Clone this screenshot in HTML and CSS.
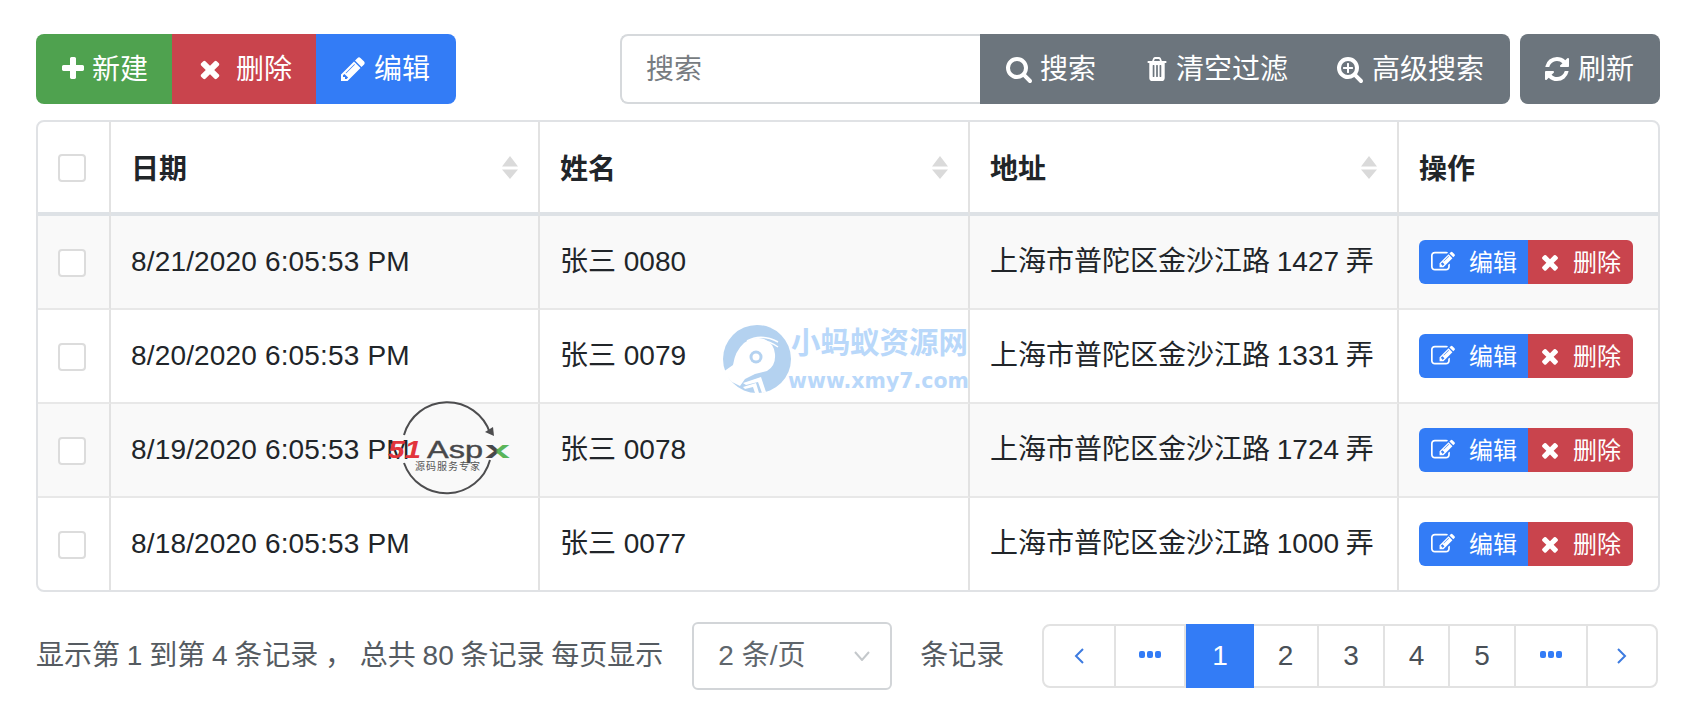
FILE: index.html
```html
<!DOCTYPE html>
<html lang="zh-CN">
<head>
<meta charset="utf-8">
<title>表格</title>
<link rel="stylesheet" href="styles.css">
</head>
<body>
<svg class="defs" width="0" height="0" aria-hidden="true">
  <symbol id="i-plus" viewBox="0 0 1792 1792"><path d="M1600 736v192q0 40-28 68t-68 28h-416v416q0 40-28 68t-68 28h-192q-40 0-68-28t-28-68v-416h-416q-40 0-68-28t-28-68v-192q0-40 28-68t68-28h416v-416q0-40 28-68t68-28h192q40 0 68 28t28 68v416h416q40 0 68 28t28 68z"/></symbol>
  <symbol id="i-times" viewBox="0 0 1792 1792"><path d="M1490 1322q0 40-28 68l-136 136q-28 28-68 28t-68-28l-294-294-294 294q-28 28-68 28t-68-28l-136-136q-28-28-28-68t28-68l294-294-294-294q-28-28-28-68t28-68l136-136q28-28 68-28t68 28l294 294 294-294q28-28 68-28t68 28l136 136q28 28 28 68t-28 68l-294 294 294 294q28 28 28 68z"/></symbol>
  <symbol id="i-pencil" viewBox="0 0 1792 1792"><path d="M491 1536l91-91-235-235-91 91v107h128v128h107zm523-928q0-22-22-22-10 0-17 7l-542 542q-7 7-7 17 0 22 22 22 10 0 17-7l542-542q7-7 7-17zm-54-192l416 416-832 832h-416v-416zm683 96q0 53-37 90l-166 166-416-416 166-165q36-38 90-38 53 0 91 38l235 234q37 39 37 91z"/></symbol>
  <symbol id="i-search" viewBox="0 0 1792 1792"><path d="M1216 832q0-185-131.500-316.500t-316.500-131.500-316.500 131.500-131.500 316.500 131.500 316.500 316.500 131.500 316.500-131.500 131.500-316.500zm512 832q0 52-38 90t-90 38q-54 0-90-38l-343-342q-179 124-399 124-143 0-273.500-55.500t-225-150-150-225-55.500-273.500 55.500-273.500 150-225 225-150 273.500-55.500 273.500 55.500 225 150 150 225 55.500 273.500q0 220-124 399l343 343q37 37 37 90z"/></symbol>
  <symbol id="i-search-plus" viewBox="0 0 1792 1792"><path d="M1088 800v64q0 13-9.500 22.500t-22.500 9.500h-224v224q0 13-9.500 22.500t-22.500 9.500h-64q-13 0-22.500-9.500t-9.500-22.500v-224h-224q-13 0-22.500-9.500t-9.500-22.500v-64q0-13 9.500-22.500t22.500-9.500h224v-224q0-13 9.500-22.500t22.500-9.500h64q13 0 22.500 9.500t9.500 22.500v224h224q13 0 22.500 9.500t9.500 22.500zm128 32q0-185-131.500-316.500t-316.500-131.500-316.500 131.500-131.500 316.500 131.500 316.500 316.500 131.500 316.500-131.500 131.500-316.500zm512 832q0 53-37.500 90.500t-90.500 37.500q-54 0-90-38l-343-342q-179 124-399 124-143 0-273.500-55.500t-225-150-150-225-55.500-273.500 55.500-273.500 150-225 225-150 273.500-55.500 273.500 55.500 225 150 150 225 55.500 273.500q0 220-124 399l343 343q37 37 37 90z"/></symbol>
  <symbol id="i-trash" viewBox="0 0 1792 1792" preserveAspectRatio="none"><path d="M704 1376v-704q0-14-9-23t-23-9h-64q-14 0-23 9t-9 23v704q0 14 9 23t23 9h64q14 0 23-9t9-23zm256 0v-704q0-14-9-23t-23-9h-64q-14 0-23 9t-9 23v704q0 14 9 23t23 9h64q14 0 23-9t9-23zm256 0v-704q0-14-9-23t-23-9h-64q-14 0-23 9t-9 23v704q0 14 9 23t23 9h64q14 0 23-9t9-23zm-544-992h448l-48-117q-7-9-17-11h-317q-10 2-17 11zm928 32v64q0 14-9 23t-23 9h-96v948q0 83-47 143.500t-113 60.500h-832q-66 0-113-58.500t-47-141.500v-952h-96q-14 0-23-9t-9-23v-64q0-14 9-23t23-9h309l70-167q15-37 54-63t79-26h320q40 0 79 26t54 63l70 167h309q14 0 23 9t9 23z"/></symbol>
  <symbol id="i-refresh" viewBox="0 0 1792 1792"><path d="M1639 1056q0 5-1 7-64 268-268 434.500t-478 166.500q-146 0-282.500-55t-243.500-157l-129 129q-19 19-45 19t-45-19-19-45v-448q0-26 19-45t45-19h448q26 0 45 19t19 45-19 45l-137 137q71 66 161 102t187 36q134 0 250-65t186-179q11-17 53-117 8-23 30-23h192q13 0 22.500 9.500t9.500 22.500zm25-800v448q0 26-19 45t-45 19h-448q-26 0-45-19t-19-45 19-45l138-138q-148-137-349-137-134 0-250 65t-186 179q-11 17-53 117-8 23-30 23h-199q-13 0-22.500-9.500t-9.500-22.500v-7q65-268 270-434.500t480-166.500q146 0 284 55.500t245 156.500l130-129q19-19 45-19t45 19 19 45z"/></symbol>
  <symbol id="i-edit" viewBox="0 0 1792 1792"><path d="M888 1184l116-116-152-152-116 116v56h96v96h56zm440-720q-16-16-33 1l-350 350q-17 17-1 33t33-1l350-350q17-17 1-33zm80 594v190q0 119-84.500 203.500t-203.500 84.500h-832q-119 0-203.500-84.500t-84.500-203.500v-832q0-119 84.500-203.500t203.500-84.500h832q63 0 117 25 15 7 18 23 3 17-9 29l-49 49q-14 14-32 8-23-6-45-6h-832q-66 0-113 47t-47 113v832q0 66 47 113t113 47h832q66 0 113-47t47-113v-126q0-13 9-22l64-64q15-15 35-8t20 29zm-96-738l288 288-672 672h-288v-288zm444 132l-92 92-288-288 92-92q28-28 68-28t68 28l152 152q28 28 28 68t-28 68z"/></symbol>
  <symbol id="i-sort" viewBox="0 0 16 24"><path d="M8 0l8 10.500H0zM0 13.500h16L8 23z"/></symbol>
  <symbol id="i-dots" viewBox="0 0 22 7"><rect x="0" y="0" width="6" height="7" rx="2"/><rect x="8" y="0" width="6" height="7" rx="2"/><rect x="16" y="0" width="6" height="7" rx="2"/></symbol>
</svg>

<main class="page">
  <div class="toolbar">
    <div class="btn-group">
      <button class="btn btn-new"><svg class="ico"><use href="#i-plus"/></svg><span>新建</span></button>
      <button class="btn btn-del"><svg class="ico"><use href="#i-times"/></svg><span>删除</span></button>
      <button class="btn btn-edit"><svg class="ico"><use href="#i-pencil"/></svg><span>编辑</span></button>
    </div>
    <div class="tools">
      <div class="search-group">
        <input class="search-input" type="text" placeholder="搜索">
        <div class="search-btns">
          <button class="btn btn-gray btn-search"><svg class="ico"><use href="#i-search"/></svg><span>搜索</span></button>
          <button class="btn btn-gray btn-clear"><svg class="ico ico-trash"><use href="#i-trash"/></svg><span>清空过滤</span></button>
          <button class="btn btn-gray btn-adv"><svg class="ico"><use href="#i-search-plus"/></svg><span>高级搜索</span></button>
        </div>
      </div>
      <button class="btn btn-gray btn-refresh"><svg class="ico"><use href="#i-refresh"/></svg><span>刷新</span></button>
    </div>
  </div>

  <div class="table-wrap">
    <table class="grid">
      <colgroup>
        <col class="c-check"><col class="c-date"><col class="c-name"><col class="c-addr"><col>
      </colgroup>
      <thead>
        <tr>
          <th><span class="check"></span></th>
          <th><div class="th-in"><span class="th-text">日期</span><svg class="sort"><use href="#i-sort"/></svg></div></th>
          <th><div class="th-in"><span class="th-text">姓名</span><svg class="sort"><use href="#i-sort"/></svg></div></th>
          <th><div class="th-in"><span class="th-text">地址</span><svg class="sort"><use href="#i-sort"/></svg></div></th>
          <th><div class="th-in"><span class="th-text">操作</span></div></th>
        </tr>
      </thead>
      <tbody>
        <tr>
          <td><span class="check"></span></td><td class="t-date">8/21/2020 6:05:53 PM</td><td>张三 0080</td><td class="t-addr">上海市普陀区金沙江路 1427 弄</td>
          <td><div class="actions"><button class="act act-edit"><svg class="ico-s"><use href="#i-edit"/></svg><span>编辑</span></button><button class="act act-del"><svg class="ico-s"><use href="#i-times"/></svg><span>删除</span></button></div></td>
        </tr>
        <tr>
          <td><span class="check"></span></td><td class="t-date">8/20/2020 6:05:53 PM</td><td>张三 0079</td><td class="t-addr">上海市普陀区金沙江路 1331 弄</td>
          <td><div class="actions"><button class="act act-edit"><svg class="ico-s"><use href="#i-edit"/></svg><span>编辑</span></button><button class="act act-del"><svg class="ico-s"><use href="#i-times"/></svg><span>删除</span></button></div></td>
        </tr>
        <tr>
          <td><span class="check"></span></td><td class="t-date">8/19/2020 6:05:53 PM</td><td>张三 0078</td><td class="t-addr">上海市普陀区金沙江路 1724 弄</td>
          <td><div class="actions"><button class="act act-edit"><svg class="ico-s"><use href="#i-edit"/></svg><span>编辑</span></button><button class="act act-del"><svg class="ico-s"><use href="#i-times"/></svg><span>删除</span></button></div></td>
        </tr>
        <tr>
          <td><span class="check"></span></td><td class="t-date">8/18/2020 6:05:53 PM</td><td>张三 0077</td><td class="t-addr">上海市普陀区金沙江路 1000 弄</td>
          <td><div class="actions"><button class="act act-edit"><svg class="ico-s"><use href="#i-edit"/></svg><span>编辑</span></button><button class="act act-del"><svg class="ico-s"><use href="#i-times"/></svg><span>删除</span></button></div></td>
        </tr>
      </tbody>
    </table>
  </div>

  <div class="footer">
    <div class="info">
      <span class="info-text">显示第 1 到第 4 条记录 ， 总共 80 条记录 每页显示</span>
      <div class="page-size"><span>2 条/页</span><svg class="size-caret" viewBox="0 0 16 10"><path d="M1 1l7 8 7-8"/></svg></div>
      <span>条记录</span>
    </div>
    <ul class="pager">
      <li class="p-prev"><svg class="chev" viewBox="0 0 10 16"><path d="M9 1L2 8l7 7"/></svg></li>
      <li class="p-more-a"><svg class="dots"><use href="#i-dots"/></svg></li>
      <li class="p-num active">1</li>
      <li class="p-num">2</li>
      <li class="p-num p-wide">3</li>
      <li class="p-num">4</li>
      <li class="p-num p-wide">5</li>
      <li class="p-more-b"><svg class="dots"><use href="#i-dots"/></svg></li>
      <li class="p-next"><svg class="chev" viewBox="0 0 10 16"><path d="M1 1l7 7-7 7"/></svg></li>
    </ul>
  </div>

  <div class="wm-ant">
    <svg class="ant" viewBox="0 0 68 68">
      <circle cx="34" cy="34" r="34" fill="#b4d2f0"/>
      <path fill="#fff" d="M10 40q2-14 11-22 10-7 20-4 10 4 11 15 1 12-8 17l-12 3-10 5-5 7-8-4-9-10z"/>
      <path fill="none" stroke="#fff" stroke-width="1.500" d="M24 16q14-8 31 1M30 17q12-4 25 5"/>
      <circle cx="33" cy="32" r="6.500" fill="#b4d2f0"/>
      <circle cx="33" cy="32" r="3.500" fill="#fff"/>
      <path fill="#fff" d="M20 58l18-6 5 15-4 1-4-11-12 3zM20 62l13-4 3 10-4 0-2-6-8 2z"/>
    </svg>
    <div class="wm-ant-text">
      <div class="wm-ant-title">小蚂蚁资源网</div>
      <div class="wm-ant-url">www.xmy7.com</div>
    </div>
  </div>

  <svg class="wm-aspx" viewBox="0 0 124 92">
    <defs>
      <linearGradient id="aspx-x" x1="0" y1="0" x2="1" y2="0">
        <stop offset="0.400" stop-color="#48484a"/>
        <stop offset="0.500" stop-color="#5ab55a"/>
      </linearGradient>
    </defs>
    <path fill="none" stroke="#4d4d4f" stroke-width="2" d="M16 33A45 45 0 0 1 102 31M102 58A45 45 0 0 1 16 61"/>
    <path fill="#4d4d4f" d="M97 30l8-5 1 9z"/>
    <text x="0" y="56" class="a-51" textLength="33" lengthAdjust="spacingAndGlyphs">51</text>
    <text x="39" y="56" class="a-asp" textLength="56" lengthAdjust="spacingAndGlyphs">Asp</text>
    <text x="97" y="56" class="a-x" textLength="25" lengthAdjust="spacingAndGlyphs">x</text>
    <text x="27" y="68" class="a-sub" textLength="65">源码服务专家</text>
  </svg>
</main>
</body>
</html>
```

FILE: styles.css
```css
* { box-sizing: border-box; }
html, body { margin: 0; padding: 0; background: #fff; }
body {
  font-family: "Liberation Sans", "Noto Sans CJK SC", sans-serif;
  font-size: 28px;
  line-height: 36px;
  color: #212529;
}
.defs { position: absolute; }
.page { position: relative; height: 722px; padding: 34px 32px 0 36px; overflow: hidden; }

/* toolbar */
.toolbar { display: flex; justify-content: space-between; height: 70px; margin-bottom: 16px; }
.btn-group, .tools, .search-group, .search-btns { display: flex; }
.tools { gap: 10px; }
.btn {
  display: flex; align-items: center; height: 70px; border: 0; margin: 0;
  font: inherit; color: #fff; white-space: nowrap;
}
.btn span { padding-top: 2px; }
.ico { width: 28px; height: 28px; fill: #fff; flex: none; }
.ico-trash { width: 24px; height: 28px; }
.btn-new { background: #4fa24f; padding: 0 24px 0 23px; gap: 5px; border-radius: 8px 0 0 8px; }
.btn-del { background: #c9444d; padding: 0 24px 0 24px; gap: 12px; }
.btn-edit { background: #337cf6; padding: 0 26px 0 23px; gap: 7px; border-radius: 0 8px 8px 0; }
.search-input {
  width: 360px; height: 70px; padding: 2px 24px 0; margin: 0;
  border: 2px solid #d6d9dc; border-right: 0; border-radius: 8px 0 0 8px;
  font: inherit; color: #495057; background: #fff; outline: none;
}
.search-input::placeholder { color: #777c81; opacity: 1; }
.btn-gray { background: #6c757d; }
.search-btns { border-radius: 0 8px 8px 0; overflow: hidden; }
.btn-search { padding: 0 0 0 25px; gap: 7px; width: 140px; }
.btn-clear { padding: 0 0 0 25px; gap: 7px; width: 194px; }
.btn-adv { padding: 0 0 0 22px; gap: 8px; width: 196px; }
.btn-refresh { width: 140px; padding: 0 0 0 23px; gap: 7px; border-radius: 8px; }

/* table */
.table-wrap { border: 2px solid #e0e2e5; border-radius: 8px; overflow: hidden; }
.grid { width: 100%; border-collapse: separate; border-spacing: 0; table-layout: fixed; }
.c-check { width: 73px; }
.c-date { width: 429px; }
.c-name { width: 430px; }
.c-addr { width: 429px; }
.grid th, .grid td { padding: 0 20px; text-align: left; border-right: 2px solid #e2e2e2; white-space: nowrap; overflow: hidden; }
.grid th:last-child, .grid td:last-child { border-right: 0; }
.grid th { height: 94px; padding-top: 2px; border-bottom: 4px solid #dee2e6; font-weight: 700; }
.th-text { padding-top: 4px; }
.grid td { height: 94px; border-bottom: 2px solid #e8e8e8; }
.grid tbody tr:last-child td { border-bottom: 0; height: 92px; }
.grid tbody tr:nth-child(odd) td { background: #f9f9f9; }
.grid th:first-child, .grid td:first-child { padding: 2px 0 0 20px; }
.t-date { letter-spacing: 0.16px; }
.t-addr { word-spacing: -1px; }
.check { display: block; width: 28px; height: 28px; border: 2px solid #dcdcdc; border-radius: 4px; background: #fff; }
.th-in { display: flex; justify-content: space-between; align-items: center; }
.sort { width: 16px; height: 24px; fill: #dadada; }
.actions { display: flex; }
.act {
  display: flex; align-items: center; height: 44px; border: 0; margin: 0;
  font: inherit; font-size: 24px; line-height: 30px; color: #fff;
}
.act span { padding-top: 2px; }
.ico-s { width: 24px; height: 24px; fill: #fff; flex: none; }
.act-edit { width: 109px; padding: 0 0 0 12px; gap: 14px; background: #337cf6; border-radius: 6px 0 0 6px; }
.act-del { width: 105px; padding: 0 0 0 10px; gap: 11px; background: #c9444d; border-radius: 0 6px 6px 0; }

/* footer */
.footer { display: flex; justify-content: space-between; align-items: center; margin-top: 30px; height: 68px; color: #555b61; }
.info { display: flex; align-items: center; gap: 28px; }
.info-text { word-spacing: -1px; margin-right: 1px; }
.page-size {
  display: flex; align-items: center; justify-content: space-between;
  width: 200px; height: 68px; padding: 0 20px 0 24px;
  border: 2px solid #d2d5d8; border-radius: 6px; color: #5f666c;
}
.size-caret { width: 16px; height: 10px; fill: none; stroke: #c4c8cb; stroke-width: 2; }
.pager { display: flex; list-style: none; margin: 0 2px 0 0; padding: 0; height: 64px; border: 2px solid #e2e2e2; border-radius: 8px; }
.pager li { display: flex; align-items: center; justify-content: center; border-right: 2px solid #e2e2e2; color: #495057; }
.pager li:last-child { border-right: 0; }
.p-prev { width: 72px; }
.p-more-a { width: 70px; }
.p-num { width: 65px; }
.pager .p-wide { width: 66px; }
.p-more-b { width: 72px; }
.p-next { width: 68px; }
.pager .active { width: 68px; margin: -2px 0; height: 64px; background: #337cf6; color: #fff; border-right: 0; }
.chev { width: 10px; height: 16px; fill: none; stroke: #3d7be0; stroke-width: 2; }
.dots { width: 22px; height: 7px; fill: #337cf6; margin-top: -4px; }

/* watermarks lying over the table */
.wm-ant { position: absolute; left: 723px; top: 325px; display: flex; align-items: flex-start; }
.ant { width: 68px; height: 68px; flex: none; }
.wm-ant-text { margin-left: -3px; color: #b9d8fa; font-weight: 700; }
.wm-ant-title { padding-left: 3px; font-size: 29.500px; line-height: 36px; white-space: nowrap; }
.wm-ant-url { font-family: "DejaVu Sans", sans-serif; font-size: 20.500px; line-height: 28px; white-space: nowrap; margin-top: 6px; }
.wm-aspx { position: absolute; left: 388px; top: 402px; width: 124px; height: 92px; overflow: visible; }
.wm-aspx text { font-family: "Liberation Sans", "Noto Sans CJK SC", sans-serif; }
.a-51 { font-size: 24px; font-weight: 700; font-style: italic; fill: #e2343c; }
.a-asp { font-size: 24px; font-weight: 400; fill: #48484a; stroke: #48484a; stroke-width: 0.400; }
.a-x { font-size: 24px; font-weight: 700; fill: url(#aspx-x); }
.a-sub { font-size: 10px; fill: #555; }
```
